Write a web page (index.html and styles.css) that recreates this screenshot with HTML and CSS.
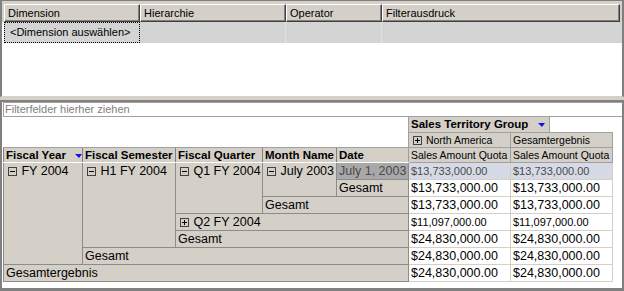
FILE: index.html
```html
<!DOCTYPE html>
<html lang="de">
<head>
    <meta charset="UTF-8">
    <title>Cube Browser</title>
    <link rel="stylesheet" href="styles.css">
</head>
<body>
<div class="window">

    <div class="filter-panel">
        <div class="filter-head">
            <div class="fh w-dim">Dimension</div>
            <div class="fh w-hier">Hierarchie</div>
            <div class="fh w-op">Operator</div>
            <div class="fh w-expr">Filterausdruck</div>
        </div>
        <div class="filter-row">
            <div class="fc w-dim focus">&lt;Dimension auswählen&gt;</div>
            <div class="fc w-hier"></div>
            <div class="fc w-op"></div>
            <div class="fc w-expr last"></div>
        </div>
    </div>

    <div class="pivot-panel">
        <div class="drop-zone">Filterfelder hierher ziehen</div>

        <table class="pivot">
            <colgroup>
                <col class="c-year">
                <col class="c-sem">
                <col class="c-qtr">
                <col class="c-month">
                <col class="c-date">
                <col class="c-val">
                <col class="c-val">
            </colgroup>
            <tr class="r-top">
                <td class="corner" colspan="5" rowspan="2"></td>
                <td class="col-area" colspan="2"><div class="col-field">Sales Territory Group <span class="drop"></span></div></td>
            </tr>
            <tr class="r-top">
                <td class="col-member"><span class="box plus"></span> North America</td>
                <td class="col-member">Gesamtergebnis</td>
            </tr>
            <tr class="r-top">
                <td class="row-field">Fiscal Year <span class="drop"></span></td>
                <td class="row-field">Fiscal Semester</td>
                <td class="row-field">Fiscal Quarter</td>
                <td class="row-field">Month Name</td>
                <td class="row-field">Date</td>
                <td class="col-member">Sales Amount Quota</td>
                <td class="col-member">Sales Amount Quota</td>
            </tr>
            <tr>
                <td class="rh" rowspan="6"><span class="box"></span> FY 2004</td>
                <td class="rh" rowspan="5"><span class="box"></span> H1 FY 2004</td>
                <td class="rh" rowspan="3"><span class="box"></span> Q1 FY 2004</td>
                <td class="rh" rowspan="2"><span class="box"></span> July 2003</td>
                <td class="rh sel">July 1, 2003</td>
                <td class="val sel small">$13,733,000.00</td>
                <td class="val sel small">$13,733,000.00</td>
            </tr>
            <tr>
                <td class="rh">Gesamt</td>
                <td class="val">$13,733,000.00</td>
                <td class="val">$13,733,000.00</td>
            </tr>
            <tr>
                <td class="rh" colspan="2">Gesamt</td>
                <td class="val">$13,733,000.00</td>
                <td class="val">$13,733,000.00</td>
            </tr>
            <tr>
                <td class="rh" colspan="3"><span class="box plus"></span> Q2 FY 2004</td>
                <td class="val small">$11,097,000.00</td>
                <td class="val small">$11,097,000.00</td>
            </tr>
            <tr>
                <td class="rh" colspan="3">Gesamt</td>
                <td class="val">$24,830,000.00</td>
                <td class="val">$24,830,000.00</td>
            </tr>
            <tr>
                <td class="rh" colspan="4">Gesamt</td>
                <td class="val">$24,830,000.00</td>
                <td class="val">$24,830,000.00</td>
            </tr>
            <tr>
                <td class="rh" colspan="5">Gesamtergebnis</td>
                <td class="val">$24,830,000.00</td>
                <td class="val">$24,830,000.00</td>
            </tr>
        </table>
    </div>

</div>
</body>
</html>
```

FILE: styles.css
```css
body
{
    margin:0;
    background-color:#d4d0c8;
    font-family:"Liberation Sans", Arial, sans-serif;
    color:black;
}
.window
{
    width:624px;
    height:291px;
}

/* filter grid */
.filter-panel
{
    height:97px;
    box-sizing:border-box;
    border-top:1px solid #808080;
    border-left:2px solid #808080;
    border-right:2px solid #808080;
    border-bottom:1px solid #d4d0c8;
    background-color:white;
}
.filter-head
{
    display:flex;
    background-color:#d4d0c8;
    padding:3px 0 0 2px;
}
.filter-row
{
    display:flex;
    margin-left:2px;
    background-color:#d4d4d4;
}
.w-dim { width:136px; }
.w-hier { width:146px; }
.w-op { width:96px; }
.w-expr { width:238px; }
.fh
{
    height:18px;
    box-sizing:border-box;
    border:1px solid;
    border-color:white #404040 #404040 white;
    box-shadow:inset -1px -1px #808080;
    padding-left:3px;
    font-size:11px;
    line-height:16px;
}
.fc
{
    height:21px;
    box-sizing:border-box;
    border-right:1px solid #e4dfdf;
    font-size:11px;
    line-height:19px;
}
.fc.last
{
    border-right:none;
}
.focus
{
    border:1px dotted black;
    padding-left:5px;
}

/* pivot */
.pivot-panel
{
    margin-top:3px;
    height:191px;
    box-sizing:border-box;
    border-top:2px solid #808080;
    border-left:2px solid #808080;
    border-right:2px solid #808080;
    border-bottom:3px solid #808080;
    background-color:white;
}
.drop-zone
{
    margin-left:1px;
    height:15px;
    box-sizing:border-box;
    border:1px solid #a0a0a0;
    border-right:none;
    padding-left:1px;
    font-size:11px;
    line-height:13px;
    color:#808080;
}
.pivot
{
    margin-left:1px;
    width:609px;
    table-layout:fixed;
    border-collapse:collapse;
}
.c-year { width:79px; }
.c-sem { width:93px; }
.c-qtr { width:87px; }
.c-month { width:74px; }
.c-date { width:72px; }
.c-val { width:102px; }

.pivot td
{
    padding:0 0 0 2px;
    white-space:nowrap;
    overflow:hidden;
}
.r-top td
{
    height:14px;
}
.corner
{
    background-color:white;
    border-bottom:1px solid #a0a0a0;
}
.col-area
{
    border-left:1px solid #a0a0a0;
    padding:0 !important;
}
.col-field
{
    width:141px;
    height:15px;
    box-sizing:border-box;
    border-right:1px solid #a0a0a0;
    background-color:#d4d0c8;
    padding-left:2px;
    font-size:11.5px;
    font-weight:bold;
    line-height:15px;
}
.col-member
{
    background-color:#d4d0c8;
    border:1px solid #a0a0a0;
    font-size:10.5px;
    line-height:14px;
}
.row-field
{
    background-color:#d4d0c8;
    border-left:1px solid #808080;
    border-bottom:1px solid white;
    font-size:11.5px;
    font-weight:bold;
    line-height:14px;
}
.rh
{
    height:16px;
    vertical-align:top;
    background-color:#d4d0c8;
    border:1px solid #8c8c8c;
    font-size:12.5px;
    line-height:16px;
}
.rh.sel
{
    background-color:#a8a8a8;
    color:#4a4a4a;
}
.val
{
    height:16px;
    background-color:white;
    border:1px solid #d4d0c8;
    font-size:12.5px;
    line-height:16px;
}
.val.small
{
    font-size:11px;
}
.val.sel
{
    background-color:#d6dae6;
    color:#4a4a4a;
}
.drop
{
    display:inline-block;
    margin-left:6px;
    vertical-align:middle;
    border-left:4px solid transparent;
    border-right:3px solid transparent;
    border-top:4px solid #1010e8;
}
.box
{
    display:inline-block;
    position:relative;
    width:9px;
    height:9px;
    box-sizing:border-box;
    border:1px solid #404040;
    margin-left:2px;
    margin-right:1px;
    vertical-align:-1px;
}
.box::before
{
    content:"";
    position:absolute;
    left:1px;
    top:3px;
    width:5px;
    height:1px;
    background-color:black;
}
.box.plus::after
{
    content:"";
    position:absolute;
    left:3px;
    top:1px;
    width:1px;
    height:5px;
    background-color:black;
}
```
